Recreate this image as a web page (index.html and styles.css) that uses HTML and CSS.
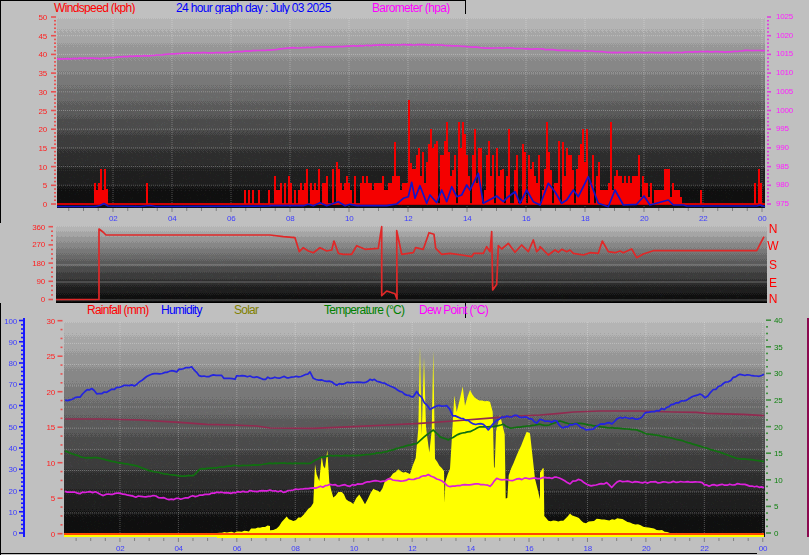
FILE: index.html
```html
<!DOCTYPE html>
<html lang="en">
<head>
  <meta charset="UTF-8">
  <title>24 hour graph day : July 03 2025</title>
  <link rel="stylesheet" href="styles.css">
</head>
<body>

  <section class="panel">
    <div class="legend legend-top">
      <span class="red">Windspeed (kph)</span>
      <span class="blue">24 hour graph day : July 03 2025</span>
      <span class="magenta">Barometer (hpa)</span>
    </div>
    <div class="chart">
      <canvas class="plot plot-wind" width="708" height="190"></canvas>
      <svg id="windChart" width="809" height="209" viewBox="0 14 809 209"></svg>
    </div>
  </section>

  <section class="panel">
    <div class="chart">
      <canvas class="plot plot-direction" width="711" height="76"></canvas>
      <svg id="directionChart" width="809" height="80" viewBox="0 223 809 80"></svg>
    </div>
  </section>

  <section class="panel">
    <div class="legend legend-bottom">
      <span class="red">Rainfall (mm)</span>
      <span class="blue">Humidity</span>
      <span class="olive">Solar</span>
      <span class="green">Temperature (°C)</span>
      <span class="magenta">Dew Point (°C)</span>
    </div>
    <div class="chart">
      <canvas class="plot plot-weather" width="701" height="215"></canvas>
      <svg id="weatherChart" width="809" height="237" viewBox="0 318 809 237"></svg>
    </div>
  </section>

  <script src="chart.js"></script>
</body>
</html>
```

FILE: styles.css
```css
html, body {
  margin: 0;
  padding: 0;
  background-color: #c0c0c0;
  overflow: hidden;
}

body {
  width: 809px;
  height: 555px;
  font-family: "Liberation Sans", Arial, sans-serif;
}

.panel {
  display: block;
}

/* legend strips above the top and bottom charts */
.legend {
  display: grid;
  box-sizing: border-box;
  width: 466px;
  font-size: 12px;
  white-space: nowrap;
  border-left: 1px solid #000;
  border-right: 1px solid #000;
}

.legend-top {
  height: 14px;
  line-height: 14px;
  overflow: hidden;
  padding-left: 53px;
  letter-spacing: -0.65px;
  border-top: 1px solid #000;
  grid-template-columns: 122px 196px max-content;
}

.legend-bottom {
  height: 15px;
  line-height: 14px;
  padding-left: 86px;
  letter-spacing: -0.75px;
  grid-template-columns: 74px 73px 90px 95px max-content;
}

.red { color: #ff0000; }
.blue { color: #0000ff; }
.magenta { color: #ff00ff; }
.olive { color: #808000; }
.green { color: #008000; }

.chart {
  position: relative;
}

.chart svg {
  display: block;
  position: relative;
}

.plot {
  position: absolute;
}

.plot-wind { left: 57px; top: 4px; }
.plot-direction { left: 56px; top: 3px; }
.plot-weather { left: 64px; top: 4px; }

/* svg text */
.tick-label {
  font-size: 8px;
  letter-spacing: -0.2px;
}

.compass {
  font-size: 12px;
  fill: #ff0000;
  text-anchor: middle;
}

.end { text-anchor: end; }

.fill-red { fill: #ff2020; }
.fill-tick-red { fill: #e85050; }
.fill-magenta { fill: #ff20ff; }
.fill-tick-magenta { fill: #e040e0; }
.fill-blue { fill: #3c3cff; }
.fill-tick-blue { fill: #1818ff; }
.fill-green { fill: #108010; }
.fill-tick-green { fill: #409040; }
.fill-tick-grey { fill: #808080; }
.fill-black { fill: #000; }
.fill-maroon { fill: #8b0a50; }
.fill-solar { fill: #ffff00; }

.grid {
  stroke: #fff;
  stroke-opacity: 0.28;
  stroke-width: 1;
  stroke-dasharray: 1 1;
}

.grid-solid {
  stroke: #fff;
  stroke-opacity: 0.3;
  stroke-width: 1;
}

.series {
  fill: none;
  stroke-width: 1.7;
  stroke-linejoin: round;
}

.series-baro { stroke: #e040e0; }
.series-direction { stroke: #e02828; }
.series-wind-base { stroke: #d00000; stroke-width: 2; }
.series-wind-bars { stroke: #f40000; stroke-width: 2; shape-rendering: crispEdges; }
.series-wind-avg { stroke: #1414c8; }
.series-rain { stroke: #ff4800; stroke-width: 2; }
.series-solar-base { stroke: #ffff00; stroke-width: 2; }
.series-humidity { stroke: #2424e0; }
.series-hot { stroke: #922a50; }
.series-temp { stroke: #107010; }
.series-dew { stroke: #dc20dc; }
```

FILE: chart.js
```js
const SVG_NS = 'http://www.w3.org/2000/svg';

let seed = 4711;
function rnd() {
  seed = (seed * 16807) % 2147483647;
  return seed / 2147483647;
}

function el(svg, name, attrs, text) {
  const node = document.createElementNS(SVG_NS, name);
  for (const key in attrs) node.setAttribute(key, attrs[key]);
  if (text !== undefined) node.textContent = text;
  svg.appendChild(node);
  return node;
}

// samples are noted at 3x, from an origin x0,y0
function samples(x0, y0, pts) {
  return pts.map(p => [x0 + p[0] / 3, y0 + p[1] / 3]);
}

// walk along the samples and add some sensor noise
function noisy(pts, amp) {
  const out = [];
  for (let i = 0; i < pts.length - 1; i++) {
    const [ax, ay] = pts[i];
    const [bx, by] = pts[i + 1];
    const n = Math.max(1, Math.round((bx - ax) / 2.5));
    for (let k = 0; k < n; k++) {
      const t = k / n;
      out.push([ax + (bx - ax) * t, ay + (by - ay) * t + (rnd() - 0.5) * amp]);
    }
  }
  out.push(pts[pts.length - 1]);
  return out;
}

function line(svg, cls, pts) {
  const points = pts.map(p => p[0].toFixed(1) + ',' + p[1].toFixed(1)).join(' ');
  return el(svg, 'polyline', { class: 'series ' + cls, points });
}

// grey gradient squeezed onto a small palette with ordered dithering
const BAYER = [0, 8, 2, 10, 12, 4, 14, 6, 3, 11, 1, 9, 15, 7, 13, 5];
function shade(canvas) {
  const ctx = canvas.getContext('2d');
  const w = canvas.width;
  const h = canvas.height;
  const img = ctx.createImageData(w, h);
  const step = 15;
  for (let y = 0; y < h; y++) {
    const value = 10 + 176 * Math.pow(1 - y / h, 1.2);
    const level = value / step;
    const base = Math.floor(level);
    const amount = Math.min(1, Math.max(0, (level - base - 0.3) * 2.5));
    for (let x = 0; x < w; x++) {
      const limit = (BAYER[(y % 4) * 4 + (x % 4)] + 0.5) / 16;
      const grey = (base + (amount > limit ? 1 : 0)) * step;
      const i = (y * w + x) * 4;
      const speck = y > h * 0.35 && rnd() < 0.12 ? 6 : 0;
      img.data[i] = grey + (rnd() < 0.5 ? speck : 0);
      img.data[i + 1] = grey + (rnd() < 0.5 ? speck : 0);
      img.data[i + 2] = grey + (rnd() < 0.5 ? speck : 0);
      img.data[i + 3] = 255;
    }
  }
  ctx.putImageData(img, 0, 0);
}

function ticks(svg, o) {
  for (let i = 0; i <= o.count; i++) {
    const len = i % o.every === 0 ? o.major : o.minor;
    const x = o.side === 'left' ? o.x - len : o.x;
    el(svg, 'rect', {
      class: o.cls, x, y: o.zero - i * o.gap - 0.8, width: len, height: 1.6
    });
  }
}

function labels(svg, list, x, cls) {
  list.forEach(item => {
    el(svg, 'text', { class: 'tick-label ' + cls, x, y: item[1] + 3 }, item[0]);
  });
}

function hourAxis(svg, x0, perHour, tickY, labelY) {
  for (let half = 1; half <= 48; half++) {
    const x = x0 + half / 2 * perHour;
    const tall = half % 4 === 0 ? 4 : 3;
    el(svg, 'rect', { class: 'fill-tick-grey', x: x - 0.5, y: tickY, width: 1, height: tall });
  }
  for (let hour = 2; hour <= 24; hour += 2) {
    const text = hour === 24 ? '00' : String(hour).padStart(2, '0');
    el(svg, 'text', {
      class: 'tick-label fill-blue', x: x0 + hour * perHour - 4, y: labelY
    }, text);
  }
}

function hourGrid(svg, x0, perHour, top, bottom) {
  for (let hour = 2; hour <= 24; hour += 2) {
    const x = x0 + hour * perHour;
    el(svg, 'line', { class: 'grid', x1: x, x2: x, y1: top, y2: bottom });
  }
}

function rowGrid(svg, cls, rows, left, right) {
  rows.forEach(y => el(svg, 'line', { class: cls, x1: left, x2: right, y1: y, y2: y }));
}

/* ---------- wind and barometer ---------- */

const WIND_PEAKS = [
  [94, 5.6], [96, 3.7], [99, 5.6], [101, 9.5], [103, 3.7], [104, 9.5], [106, 4],
  [147, 5.6], [244, 3.7], [248, 3.7], [252, 3.7], [258, 3.7], [268, 3.7],
  [306, 9.3], [319, 9.3], [332, 9.3], [336, 11.3], [338, 9.3], [349, 5.6],
  [395, 16.6], [408, 27.8], [410, 11], [416, 20], [417, 13], [423, 14], [428, 16], [431, 20],
  [435, 16], [442, 13], [447, 22], [449, 14], [453, 9], [458, 22], [463, 22], [467, 13],
  [472, 13], [475, 20], [478, 15], [487, 13], [493, 13], [500, 9], [509, 20], [515, 9],
  [522, 16], [525, 14], [546, 22], [548, 14], [550, 9], [562, 16.6], [570, 13], [573, 9],
  [578, 13], [581, 16], [583, 20], [587, 20], [592, 13], [597, 7.5], [611, 22], [616, 9],
  [618, 7.5], [629, 7.5], [633, 7.5], [639, 13], [643, 7.5], [650, 5.6],
  [665, 9.3], [667, 9.3], [669, 9.3], [673, 5.6], [678, 3.7], [700, 3.7],
  [754, 5.6], [758, 9.3], [760, 5.6]
];

const WIND_ZONES = [
  [270, 392, 0.62, 3.7, 7.4],
  [392, 408, 0.8, 3.7, 9.3],
  [408, 600, 0.78, 3.7, 18],
  [600, 650, 0.72, 1.9, 9.3],
  [650, 682, 0.7, 1.9, 5.6]
];

function windBars(svg) {
  const zero = 204;
  const peak = {};
  WIND_PEAKS.forEach(p => { peak[p[0] | 1] = p[1]; });
  let d = '';
  for (let x = 57; x < 765; x += 2) {
    let v = 0;
    const zone = WIND_ZONES.find(z => x >= z[0] && x < z[1]);
    if (zone && rnd() < zone[2]) {
      v = zone[3] + Math.pow(rnd(), 1.2) * (zone[4] - zone[3]);
      v = Math.round(v / 1.87) * 1.87;
    }
    if (peak[x]) v = peak[x];
    if (v > 0) d += 'M' + x + ' ' + zero + 'V' + (zero - v * 3.74).toFixed(1);
  }
  el(svg, 'path', { class: 'series series-wind-bars', d });
}

function drawWind(svg) {
  const zero = 204;
  const rows = [];
  for (let k = 1; k <= 9; k++) rows.push(zero - k * 18.7);
  rowGrid(svg, 'grid', rows, 57, 765);
  hourGrid(svg, 54, 29.5, 18, 208);

  line(svg, 'series-wind-base', [[57, zero], [765, zero]]);
  windBars(svg);

  const avg = samples(270, 90, [
    [0, 347], [100, 347], [115, 343], [130, 347], [150, 338], [170, 347], [205, 335], [225, 347],
    [240, 343], [260, 347], [350, 347], [380, 342], [400, 325], [415, 320], [425, 277], [435, 325],
    [450, 287], [470, 340], [480, 315], [500, 338], [515, 300], [530, 335], [545, 290], [560, 320],
    [575, 315], [590, 285], [600, 300], [625, 250], [640, 340], [680, 318], [700, 335], [715, 320],
    [735, 305], [750, 340], [770, 300], [790, 335], [810, 345]
  ]).concat(samples(540, 90, [
    [25, 280], [45, 305], [65, 340], [80, 330], [100, 300], [115, 320], [145, 260], [175, 340],
    [205, 350], [225, 300], [250, 345], [290, 343], [312, 318], [330, 345], [385, 330], [400, 345],
    [430, 345], [440, 348], [650, 348], [660, 345], [675, 350]
  ]));
  line(svg, 'series-wind-avg', [
    [57, 206.5], [95, 206.5], [100, 205.5], [104, 203.5], [108, 206], [140, 206.5], [150, 205.5],
    [156, 206.5], [270, 206]
  ].concat(avg));

  line(svg, 'series-baro', noisy([
    [57, 59], [90, 58], [100, 58.6], [125, 56.5], [152, 55.5], [170, 54], [190, 53], [225, 52.5],
    [240, 51.5], [270, 50], [290, 48], [325, 47], [355, 46], [385, 45], [410, 44.7], [440, 45],
    [467, 46.5], [485, 48], [510, 48], [530, 49], [540, 49], [560, 50.5], [590, 51], [612, 52.5],
    [650, 52.5], [680, 52.5], [700, 51.5], [730, 52], [745, 50.5], [765, 50.5]
  ], 0.5));

  ticks(svg, { side: 'left', x: 56, zero, gap: 3.74, count: 50, every: 5, major: 5, minor: 2, cls: 'fill-tick-red' });
  ticks(svg, { side: 'right', x: 767, zero, gap: 3.74, count: 50, every: 5, major: 4, minor: 2, cls: 'fill-tick-magenta' });

  const left = [];
  const right = [];
  for (let k = 0; k <= 10; k++) {
    left.push([String(k * 5), zero - k * 18.7]);
    right.push([String(975 + k * 5), zero - 1 - k * 18.7]);
  }
  labels(svg, left, 47, 'end fill-red');
  labels(svg, right, 776, 'fill-magenta');

  hourAxis(svg, 54, 29.5, 208, 221);
  el(svg, 'rect', { class: 'fill-black', x: 0, y: 14, width: 1, height: 209 });
}

/* ---------- wind direction ---------- */

function drawDirection(svg) {
  rowGrid(svg, 'grid-solid', [265, 282, 300], 56, 767);

  const pts = [[56, 299.5], [99, 299.5], [99, 229], [103, 232], [106, 235], [270, 235]].concat(samples(270, 205, [
    [40, 95], [75, 98], [88, 140], [100, 128], [115, 138], [130, 143], [150, 128], [170, 138], [185, 135],
    [192, 108], [205, 145], [220, 148], [245, 148], [260, 122], [285, 133], [325, 130], [335, 65], [335, 272],
    [350, 258], [375, 266], [381, 282], [380, 77], [395, 148], [430, 143], [437, 128], [460, 133], [477, 83],
    [492, 88], [497, 130], [515, 148], [540, 145], [575, 150], [605, 155], [612, 145], [640, 145], [650, 125],
    [660, 140], [665, 80], [668, 255], [680, 238], [685, 122], [695, 132], [715, 115], [735, 142], [755, 120],
    [775, 140], [790, 105], [800, 140], [810, 130]
  ])).concat(samples(540, 205, [
    [0, 125], [25, 150], [45, 135], [55, 142], [65, 133], [80, 140], [90, 135], [100, 145], [130, 150],
    [150, 143], [175, 145], [187, 108], [205, 140], [225, 143], [240, 138], [250, 143], [275, 132], [290, 158],
    [310, 147], [340, 137], [650, 137], [672, 95]
  ]));
  line(svg, 'series-direction', pts);

  ticks(svg, { side: 'left', x: 53, zero: 299.5, gap: 4.55, count: 16, every: 4, major: 4.5, minor: 2, cls: 'fill-tick-red' });
  labels(svg, [['360', 226.5], ['270', 244], ['180', 262.5], ['90', 281], ['0', 299.3]], 45, 'end fill-red');

  [['N', 232.5], ['W', 249.5], ['S', 268.5], ['E', 286.5], ['N', 302.5]].forEach(item => {
    el(svg, 'text', { class: 'compass', x: 773, y: item[1] }, item[0]);
  });
  el(svg, 'rect', { class: 'fill-black', x: 56, y: 302, width: 711, height: 1 });
}

/* ---------- rain, humidity, solar, temperature, dew point ---------- */

function drawWeather(svg) {
  const rows = [];
  for (let k = 0; k <= 8; k++) rows.push(513 - k * 21.2);
  rowGrid(svg, 'grid', rows, 64, 765);
  hourGrid(svg, 61.5, 29.22, 322, 537);

  const solar = [[217, 537], [217, 532.5], [246.7, 531.7], [253.3, 528.3], [260, 527.7], [270, 525.7]].concat(samples(270, 335, [
    [0, 583], [10, 582], [20, 580], [50, 545], [70, 560], [100, 540], [130, 505], [135, 390], [140, 420],
    [148, 435], [155, 360], [160, 395], [165, 400], [172, 345], [178, 440], [190, 490], [205, 472], [215, 470],
    [235, 500], [250, 505], [268, 478], [285, 505], [310, 460], [330, 473], [345, 440], [385, 403], [400, 410],
    [420, 415], [428, 390], [437, 370], [445, 280], [450, 38], [455, 300], [462, 65], [468, 280], [478, 350],
    [485, 290], [490, 50], [495, 370], [515, 400], [522, 410], [524, 500], [526, 440], [540, 400], [553, 180], [560, 230],
    [578, 155], [585, 210], [600, 165], [620, 195], [660, 200], [668, 230], [672, 400], [674, 400], [678, 290], [690, 240],
    [704, 300], [707, 490], [712, 490], [716, 420], [745, 350], [770, 290], [780, 295], [795, 430], [810, 490]
  ])).concat(samples(540, 335, [
    [0, 410], [9, 400], [11, 400], [13, 540], [25, 560], [70, 558], [90, 538], [110, 545], [130, 565],
    [170, 552], [200, 556], [240, 552], [270, 562], [310, 575], [350, 585], [390, 592], [415, 596], [420, 605]
  ]));
  el(svg, 'polygon', {
    class: 'fill-solar',
    points: noisy(solar, 2).map(p => p[0].toFixed(1) + ',' + p[1].toFixed(1)).join(' ')
  });
  line(svg, 'series-solar-base', [[64, 536], [764, 536]]);
  line(svg, 'series-rain', [[64, 534], [764, 534]]);

  const hot = samples(0, 335, [
    [195, 252], [300, 252], [420, 255], [500, 260], [540, 262], [620, 268], [700, 270], [770, 273], [810, 279]
  ]).concat(samples(270, 335, [
    [130, 280], [250, 275], [350, 270], [450, 265], [550, 258], [650, 250], [740, 243], [810, 240]
  ])).concat(samples(540, 335, [
    [60, 235], [100, 231], [180, 228], [300, 228], [400, 231], [470, 232], [500, 235], [610, 238], [672, 242]
  ]));
  line(svg, 'series-hot', hot);

  const temp = samples(0, 335, [
    [195, 348], [250, 368], [290, 368], [350, 382], [410, 392], [440, 405], [500, 418], [540, 423], [580, 422],
    [600, 402], [650, 398], [700, 392], [770, 390], [810, 385]
  ]).concat(samples(270, 335, [
    [120, 385], [150, 368], [180, 362], [250, 362], [300, 358], [350, 350], [400, 335], [440, 325], [470, 300],
    [490, 285], [510, 305], [535, 315], [570, 295], [600, 290], [630, 275], [670, 275], [700, 268], [720, 280], [810, 268]
  ])).concat(samples(540, 335, [
    [20, 272], [60, 258], [90, 268], [120, 265], [160, 272], [200, 278], [240, 280], [290, 285], [320, 297],
    [350, 300], [420, 315], [490, 337], [540, 352], [590, 370], [640, 375], [672, 380]
  ]));
  line(svg, 'series-temp', noisy(temp, 0.5));

  const humidity = samples(0, 335, [
    [195, 198], [240, 185], [255, 167], [275, 162], [290, 175], [320, 172], [350, 157], [380, 152], [410, 150],
    [440, 125], [455, 117], [495, 115], [515, 105], [530, 108], [550, 100], [575, 98], [597, 122], [620, 125],
    [640, 122], [665, 123], [672, 132], [705, 130], [710, 125], [750, 122], [770, 128], [790, 132], [810, 128]
  ]).concat(samples(270, 335, [
    [50, 127], [100, 122], [120, 113], [130, 130], [170, 137], [200, 148], [240, 143], [280, 145], [300, 133],
    [320, 137], [360, 150], [390, 170], [410, 180], [430, 185], [440, 170], [455, 190], [480, 225], [500, 215],
    [530, 210], [548, 240], [580, 250], [610, 265], [640, 268], [655, 285], [680, 255], [710, 243], [770, 245],
    [800, 262], [810, 255]
  ])).concat(samples(540, 335, [
    [15, 258], [50, 260], [70, 280], [90, 270], [110, 265], [130, 282], [160, 283], [180, 268], [215, 265],
    [240, 248], [300, 250], [320, 232], [380, 220], [400, 208], [440, 195], [480, 178], [495, 188], [520, 165],
    [580, 130], [600, 118], [650, 123], [672, 118]
  ]));
  line(svg, 'series-humidity', noisy(humidity, 2));

  const dew = samples(0, 335, [
    [195, 468], [240, 475], [270, 468], [310, 480], [360, 475], [400, 485], [460, 482], [500, 492], [535, 492],
    [600, 480], [650, 473], [700, 473], [750, 468], [810, 467]
  ]).concat(samples(270, 335, [
    [40, 470], [100, 460], [130, 460], [180, 450], [240, 452], [300, 440], [340, 438], [360, 432], [400, 437],
    [440, 430], [475, 418], [500, 430], [540, 455], [600, 448], [640, 448], [660, 455], [680, 430], [720, 437],
    [770, 430], [810, 430]
  ])).concat(samples(540, 335, [
    [50, 428], [90, 445], [115, 432], [140, 450], [160, 453], [200, 445], [215, 455], [240, 437], [300, 443],
    [400, 440], [480, 440], [500, 452], [600, 447], [672, 458]
  ]));
  line(svg, 'series-dew', noisy(dew, 1.6));

  el(svg, 'rect', { class: 'fill-tick-blue', x: 23, y: 318, width: 2, height: 219 });
  ticks(svg, { side: 'left', x: 23, zero: 533, gap: 4.25, count: 50, every: 5, major: 4, minor: 2, cls: 'fill-tick-blue' });
  ticks(svg, { side: 'left', x: 62.5, zero: 533.7, gap: 8.875, count: 24, every: 4, major: 5, minor: 2, cls: 'fill-tick-red' });
  ticks(svg, { side: 'right', x: 766, zero: 533, gap: 6.65, count: 32, every: 4, major: 5, minor: 2, cls: 'fill-tick-green' });

  const humidityLabels = [];
  for (let k = 0; k <= 10; k++) humidityLabels.push([String(k * 10), 533 - k * 21.25]);
  labels(svg, humidityLabels, 17, 'end fill-blue');

  const rainLabels = [];
  for (let k = 0; k <= 6; k++) rainLabels.push([String(k * 5), 533.7 - k * 35.5]);
  labels(svg, rainLabels, 55, 'end fill-red');

  const tempLabels = [];
  for (let k = 0; k <= 8; k++) tempLabels.push([String(k * 5), 533 - k * 26.6]);
  labels(svg, tempLabels, 774, 'fill-green');

  hourAxis(svg, 61.5, 29.22, 538, 551);

  el(svg, 'rect', { class: 'fill-black', x: 0, y: 318, width: 1, height: 237 });
  el(svg, 'rect', { class: 'fill-black', x: 0, y: 553, width: 757, height: 1 });
  el(svg, 'rect', { class: 'fill-maroon', x: 807, y: 318, width: 2, height: 219 });
}

document.querySelectorAll('.plot').forEach(shade);
drawWind(document.getElementById('windChart'));
drawDirection(document.getElementById('directionChart'));
drawWeather(document.getElementById('weatherChart'));
```
